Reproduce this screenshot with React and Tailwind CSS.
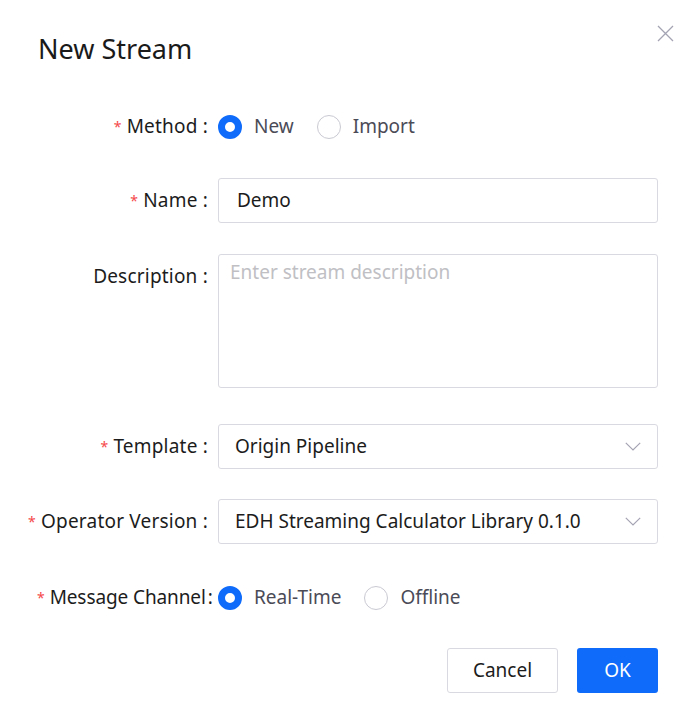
import React from "react";

const Radio = ({ checked, label }) => (
  <label className="flex items-center gap-[12px] mr-[23px] cursor-pointer">
    {checked ? (
      <span className="w-[24px] h-[24px] rounded-full border-[7px] border-[#0f6cfb] bg-white box-border" />
    ) : (
      <span className="w-[24px] h-[24px] rounded-full border border-[#c9c9d3] bg-white box-border" />
    )}
    <span className="text-[19px] text-[#4b4b57]">{label}</span>
  </label>
);

const Chevron = () => (
  <svg width="16" height="9" viewBox="0 0 16 9" fill="none">
    <path d="M0.8 0.8 L8 8 L15.2 0.8" stroke="#a3a3b3" strokeWidth="1.2" />
  </svg>
);

// long labels overflow to the right over the control, like the original form
const Label = ({ required, long, children }) => (
  <div
    className={`w-[181px] pr-[10px] h-[45px] flex items-center whitespace-nowrap text-[19px] text-[#1c1c1c] shrink-0 ${
      long ? "justify-start tracking-[-0.1px]" : "justify-end tracking-[0.2px]"
    }`}
  >
    {required && <span className="text-[#f5484a] mr-[5px] text-[14px]">*</span>}
    {children}
  </div>
);

export default function App() {
  return (
    <div className="w-[694px] h-[723px] bg-white relative" style={{ fontFamily: '"Noto Sans", "Open Sans", sans-serif' }}>
      <button className="absolute left-[657px] top-[25px]">
        <svg width="17" height="17" viewBox="0 0 17 17">
          <path d="M1 1 L16 16 M16 1 L1 16" stroke="#a3a3b3" strokeWidth="1.3" />
        </svg>
      </button>

      <div className="pl-[37px] pr-[36px] pt-[29px]">
        <h1 className="text-[27px] leading-[40px] text-[#1a1a1a] ml-[1px]">New Stream</h1>

        <div className="mt-[35px] flex items-center">
          <Label required>Method :</Label>
          <div className="flex items-center">
            <Radio checked label="New" />
            <Radio label="Import" />
          </div>
        </div>

        <div className="mt-[29px] flex items-center">
          <Label required>Name :</Label>
          <div className="flex-1 h-[45px] border border-[#d9d9e1] rounded-[3px] flex items-center pl-[18px] text-[19px] text-[#1c1c1c]">
            Demo
          </div>
        </div>

        <div className="mt-[31px] flex items-start">
          <Label>Description :</Label>
          <div className="flex-1 h-[134px] border border-[#d9d9e1] rounded-[3px] pl-[11px] pt-[3px] text-[19px] text-[#c0c0c4]">
            Enter stream description
          </div>
        </div>

        <div className="mt-[36px] flex items-center">
          <Label required>Template :</Label>
          <div className="flex-1 h-[45px] border border-[#d9d9e1] rounded-[3px] flex items-center justify-between pl-[16px] pr-[16px] text-[19px] text-[#1c1c1c]">
            <span>Origin Pipeline</span>
            <Chevron />
          </div>
        </div>

        <div className="mt-[30px] flex items-center">
          <Label required>Operator Version :</Label>
          <div className="flex-1 h-[45px] border border-[#d9d9e1] rounded-[3px] flex items-center justify-between pl-[16px] pr-[16px] text-[19px] text-[#1c1c1c]">
            <span>EDH Streaming Calculator Library 0.1.0</span>
            <Chevron />
          </div>
        </div>

        <div className="mt-[31px] flex items-center">
          <Label required long>
            Message Channel<span className="ml-[2px]">:</span>
          </Label>
          <div className="flex items-center">
            <Radio checked label="Real-Time" />
            <Radio label="Offline" />
          </div>
        </div>

        <div className="mt-[28px] flex justify-end gap-[19px]">
          <button className="w-[111px] h-[45px] border border-[#d9d9e1] rounded-[3px] text-[19px] text-[#1c1c1c] bg-white">
            Cancel
          </button>
          <button className="w-[81px] h-[45px] rounded-[3px] text-[19px] text-white bg-[#0f6cfb]">
            OK
          </button>
        </div>
      </div>
    </div>
  );
}
